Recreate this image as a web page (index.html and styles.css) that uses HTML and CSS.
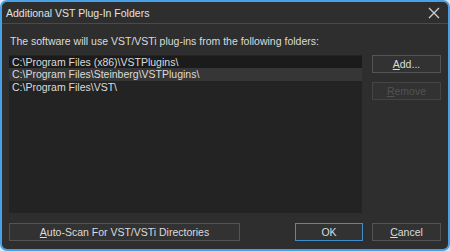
FILE: index.html
```html
<!doctype html>
<html lang="en">
	<head>
		<meta charset="utf-8">
		<title>Additional VST Plug-In Folders</title>
		<link rel="stylesheet" href="styles.css">
	</head>
	<body>
		<div class="dialog">
			<div class="titlebar">
				<span class="title">Additional VST Plug-In Folders</span>
				<span class="close">
					<svg width="12" height="12" viewBox="0 0 12 12"><path d="M1 1 L11 11 M11 1 L1 11" stroke="#cfcfcf" stroke-width="1.3" fill="none"/></svg>
				</span>
			</div>
			<div class="content">
				<div class="label">The software will use VST/VSTi plug-ins from the following folders:</div>
				<div class="main">
					<div class="list">
						<div class="row row-dark">C:\Program Files (x86)\VSTPlugins\</div>
						<div class="row row-sel">C:\Program Files\Steinberg\VSTPlugins\</div>
						<div class="row">C:\Program Files\VST\</div>
					</div>
					<div class="side">
						<div class="btn"><u>A</u>dd...</div>
						<div class="btn btn-off"><u>R</u>emove</div>
					</div>
				</div>
				<div class="footer">
					<div class="btn btn-wide"><u>A</u>uto-Scan For VST/VSTi Directories</div>
					<div class="spacer"></div>
					<div class="btn btn-ok">OK</div>
					<div class="btn"><u>C</u>ancel</div>
				</div>
			</div>
		</div>
	</body>
</html>
```

FILE: styles.css
```css
html, body { margin: 0; padding: 0; background: #dfe9f3; }
body { font-family: "Liberation Sans", Arial, sans-serif; font-size: 10.5px; color: #dcdcdc; }

.dialog {
	width: 450px;
	height: 251px;
	box-sizing: border-box;
	border: 2px solid #48a0e6;
	border-radius: 7px;
	background: #2e2e2e;
	overflow: hidden;
}

.titlebar {
	height: 21px;
	border-bottom: 1px solid #4a4a4a;
	display: flex;
	align-items: center;
	justify-content: space-between;
	padding: 0 8px 0 4px;
}
.title { font-size: 10.5px; color: #e2e2e2; }
.close { display: flex; }

.content { padding: 0 7px; }
.label { margin-top: 11px; height: 13px; line-height: 13px; padding-left: 1px; }

.main { display: flex; margin-top: 7px; }
.list {
	width: 353px;
	height: 157px;
	background: #232323;
	padding-top: 1px;
}
.row { height: 12px; line-height: 12px; padding-left: 3px; white-space: nowrap; }
.row-dark { background: #1b1b1b; }
.row-sel { background: #363636; height: 13px; }

.side { display: flex; flex-direction: column; gap: 9px; margin-left: 10px; }

.btn {
	width: 67px;
	height: 16px;
	line-height: 16px;
	border: 1px solid #545454;
	background: #323232;
	text-align: center;
	color: #dcdcdc;
}
.btn-off { color: #525252; border-color: #444; }
.btn-ok { border-color: #3f8fce; margin-right: 9px; width: 66px; }
.btn-wide { width: 229px; }

.footer { display: flex; margin-top: 10px; }
.spacer { flex: 1; }
```
